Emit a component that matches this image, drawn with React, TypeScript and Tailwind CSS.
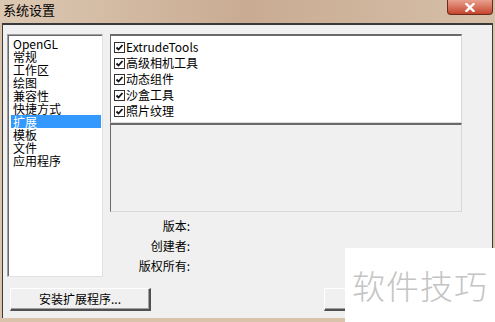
const font = "font-['Tahoma','Noto_Sans_CJK_SC',sans-serif]";

const categories = ["OpenGL", "常规", "工作区", "绘图", "兼容性", "快捷方式", "扩展", "模板", "文件", "应用程序"];
const plugins = ["ExtrudeTools", "高级相机工具", "动态组件", "沙盒工具", "照片纹理"];

function CheckBox() {
  return (
    <svg width="11" height="11" viewBox="0 0 11 11" className="shrink-0">
      <rect x="0.5" y="0.5" width="10" height="10" fill="#fff" stroke="#333" />
      <path d="M2.5 5.5 L4.5 7.5 L8.5 3" fill="none" stroke="#111" strokeWidth="1.8" />
    </svg>
  );
}

function Button({ children, className = "" }: { children?: React.ReactNode; className?: string }) {
  return (
    <div
      className={`h-[23px] flex items-center justify-center bg-[#f0f0f0] border-t border-l border-[#ffffff] border-b-2 border-r-2 border-b-[#505050] border-r-[#505050] shadow-[inset_-1px_-1px_0_#a0a0a0] text-[12px] leading-[14px] text-black ${className}`}
    >
      {children}
    </div>
  );
}

export default function App() {
  return (
    <div className={`relative w-[495px] h-[322px] overflow-hidden bg-[#d9c3ab] flex flex-col ${font}`}>
      {/* title bar */}
      <div className="h-[23px] shrink-0 flex items-start justify-between bg-gradient-to-r from-[#dcc8b2] via-[#c9ab93] to-[#d6bfa8]">
        <span className="pl-[3px] pt-[2px] text-[13px] leading-[16px] text-black">系统设置</span>
        <div className="mr-[2px] w-[46px] h-[15px] rounded-b-[4px] border border-t-0 border-[#6b2a1e] bg-gradient-to-b from-[#e8a08e] to-[#c4432c] flex items-center justify-center">
          <svg width="10" height="9" viewBox="0 0 10 9">
            <path d="M1.5 1 L8.5 8 M8.5 1 L1.5 8" stroke="#fff" strokeWidth="2.4" strokeLinecap="square" />
          </svg>
        </div>
      </div>

      {/* dialog body */}
      <div className="mx-[2px] h-[295px] shrink-0 border-t-2 border-x border-[#3a3a3a] bg-[#f0f0f0] flex flex-col pl-[4px] pt-[9px]">
        <div className="flex gap-[7px]">
          {/* category list */}
          <div className="w-[96px] h-[243px] bg-white border-t border-l border-[#a0a0a0] border-b border-r border-b-[#e0e0e0] border-r-[#e0e0e0] shadow-[inset_1px_1px_0_#696969] pl-[3px] pt-[2px] text-[12px] text-black">
            {categories.map((c) => (
              <div
                key={c}
                className={`h-[13px] leading-[13px] pl-[2px] ${c === "扩展" ? "bg-[#3399ff] text-white mr-[1px]" : ""}`}
              >
                {c}
              </div>
            ))}
          </div>

          {/* right column */}
          <div className="w-[352px] flex flex-col">
            <div className="h-[89px] bg-white border-t-2 border-l border-[#6a6a6a] border-r border-b border-r-[#d8d8d8] border-b-[#d8d8d8] pl-[3px] pt-[3px] text-[12px] text-black">
              {plugins.map((p) => (
                <div key={p} className="h-[16px] leading-[16px] flex items-center gap-[1px]">
                  <CheckBox />
                  <span>{p}</span>
                </div>
              ))}
            </div>
            <div className="h-[89px] bg-[#f0f0f0] border-t-2 border-l border-[#6a6a6a] border-r border-b border-r-[#d8d8d8] border-b-[#d8d8d8]" />
            <div className="mt-[4px] w-[80px] flex flex-col items-end text-[12px] leading-[20px] text-black">
              <span>版本:</span>
              <span>创建者:</span>
              <span>版权所有:</span>
            </div>
          </div>
        </div>

        {/* buttons */}
        <div className="mt-[11px] flex gap-[173px] pl-[3px]">
          <Button className="w-[141px]">安装扩展程序...</Button>
          <Button className="w-[80px]">关闭</Button>
        </div>
      </div>

      {/* watermark overlay */}
      <div className="absolute left-[345px] top-[248px] w-[150px] h-[74px] bg-white flex items-center justify-center">
        <span className="text-[33px] leading-[40px] text-[#c4c4c4] tracking-[1px] font-['Noto_Sans_CJK_SC',sans-serif] font-light">软件技巧</span>
      </div>
    </div>
  );
}
